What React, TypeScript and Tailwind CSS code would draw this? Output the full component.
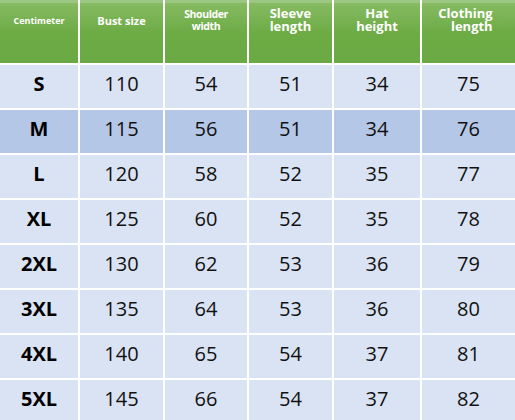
import React from "react";

const rows: [string, number, number, number, number, number][] = [
  ["S", 110, 54, 51, 34, 75],
  ["M", 115, 56, 51, 34, 76],
  ["L", 120, 58, 52, 35, 77],
  ["XL", 125, 60, 52, 35, 78],
  ["2XL", 130, 62, 53, 36, 79],
  ["3XL", 135, 64, 53, 36, 80],
  ["4XL", 140, 65, 54, 37, 81],
  ["5XL", 145, 66, 54, 37, 82],
];

function Head({ children, align = "text-center" }: { children: React.ReactNode; align?: string }) {
  return (
    <div className="h-[63px] bg-gradient-to-b from-[#86bb62] via-[#6dab45] to-[#6aa943] border-t-[3px] border-[#9cc883]">
      <div className={`h-[34px] flex items-center justify-center text-white font-bold ${align}`}>
        {children}
      </div>
    </div>
  );
}

export default function App() {
  return (
    <div
      className="w-[515px] h-[420px] overflow-hidden bg-white"
      style={{ fontFamily: '"Open Sans", "Noto Sans", sans-serif' }}
    >
      <div className="grid grid-cols-[78px_83px_82px_83px_86px_93px] gap-[2px] bg-white">
        <Head>
          <span className="text-[9px] leading-none">Centimeter</span>
        </Head>
        <Head>
          <span className="text-[11px] leading-none">Bust size</span>
        </Head>
        <Head>
          <span className="text-[10.5px] leading-[12px] tracking-[-0.4px]">
            Shoulder
            <br />
            width
          </span>
        </Head>
        <Head>
          <span className="text-[13px] leading-[13px] text-left">
            Sleeve
            <br />
            length
          </span>
        </Head>
        <Head>
          <span className="text-[13px] leading-[13px]">
            Hat
            <br />
            height
          </span>
        </Head>
        <Head>
          <span className="text-[13px] leading-[13px] text-right pr-[6px]">
            Clothing
            <br />
            length
          </span>
        </Head>
        {rows.map((r, i) => {
          const bg = r[0] === "M" ? "bg-[#b4c7e7]" : "bg-[#dae3f3]";
          return (
            <React.Fragment key={i}>
              {r.map((v, j) => (
                <div
                  key={j}
                  className={`h-[43px] flex items-center justify-center pb-[5px] text-[20px] leading-none ${bg} ${
                    j === 0 ? "font-bold text-black" : "text-[#111]"
                  }`}
                >
                  {v}
                </div>
              ))}
            </React.Fragment>
          );
        })}
      </div>
    </div>
  );
}
